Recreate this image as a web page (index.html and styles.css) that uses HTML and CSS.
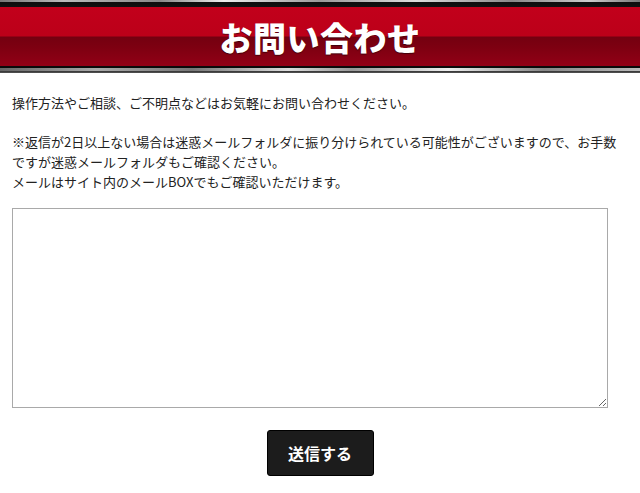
FILE: index.html
```html
<!DOCTYPE html>
<html lang="ja">
<head>
<meta charset="utf-8">
<title>お問い合わせ</title>
<link rel="stylesheet" href="styles.css">
</head>
<body>
<header class="banner">
  <div class="rule rule-top"></div>
  <div class="band"><h1 class="title">お問い合わせ</h1></div>
  <div class="rule rule-bottom"></div>
</header>
<main class="content">
  <p class="lead">操作方法やご相談、ご不明点などはお気軽にお問い合わせください。</p>
  <p class="note">※返信が2日以上ない場合は迷惑メールフォルダに振り分けられている可能性がございますので、お手数ですが迷惑メールフォルダもご確認ください。<br>メールはサイト内のメールBOXでもご確認いただけます。</p>
  <form class="form">
    <textarea class="message"></textarea>
    <div class="actions"><button type="button" class="submit">送信する</button></div>
  </form>
</main>
</body>
</html>
```
FILE: styles.css
```css
* { box-sizing: border-box; }
html, body { margin: 0; padding: 0; background: #fff; }
body {
  font-family: "Noto Sans CJK JP", "Noto Sans", sans-serif;
  color: #222;
}
.banner { display: flex; flex-direction: column; }
.rule { height: 7px; }
.rule-top {
  background:
    linear-gradient(to bottom, transparent 0, transparent 2px, #0d0d0d 2px, #111 7px),
    linear-gradient(to right, #777 0%, #bbb 10%, #888 25%, #eee 35%, #999 50%, #ddd 65%, #888 80%, #ccc 92%, #777 100%);
}
.rule-bottom {
  background:
    linear-gradient(to bottom, #0a0a0a 0, #0a0a0a 2px, transparent 2px, transparent 5px, #333 5px, #555 7px),
    linear-gradient(to right, #666 0%, #aaa 15%, #777 30%, #ddd 45%, #999 55%, #eee 70%, #888 85%, #bbb 100%);
}
.band {
  height: 59px;
  display: flex;
  align-items: center;
  justify-content: center;
  background: linear-gradient(to bottom, #c2001b 0, #bc0019 29px, #740010 30px, #7d0011 40px, #920016 59px);
}
.title {
  margin: 0;
  color: #fff;
  font-size: 33px;
  font-weight: 900;
  letter-spacing: 0.5px;
  line-height: 1;
  text-shadow: 0 1px 1px rgba(0,0,0,0.5);
  padding-top: 2px;
}
.content { padding: 20px 12px 17px; }
.lead, .note {
  margin: 0;
  font-size: 13px;
  line-height: 20px;
}
.note { margin-top: 19px; }
.form { margin-top: 16px; display: flex; flex-direction: column; }
.message {
  width: 596px;
  height: 200px;
  border: 1px solid #a9a9a9;
  resize: vertical;
  display: block;
}
.actions { display: flex; justify-content: center; margin-top: 22px; }
.submit {
  width: 107px;
  height: 46px;
  background: #1c1c1c;
  color: #fff;
  border: 1px solid #000;
  border-radius: 3px;
  font-family: "Noto Sans CJK JP", sans-serif;
  font-size: 16px;
  font-weight: 700;
}
```
